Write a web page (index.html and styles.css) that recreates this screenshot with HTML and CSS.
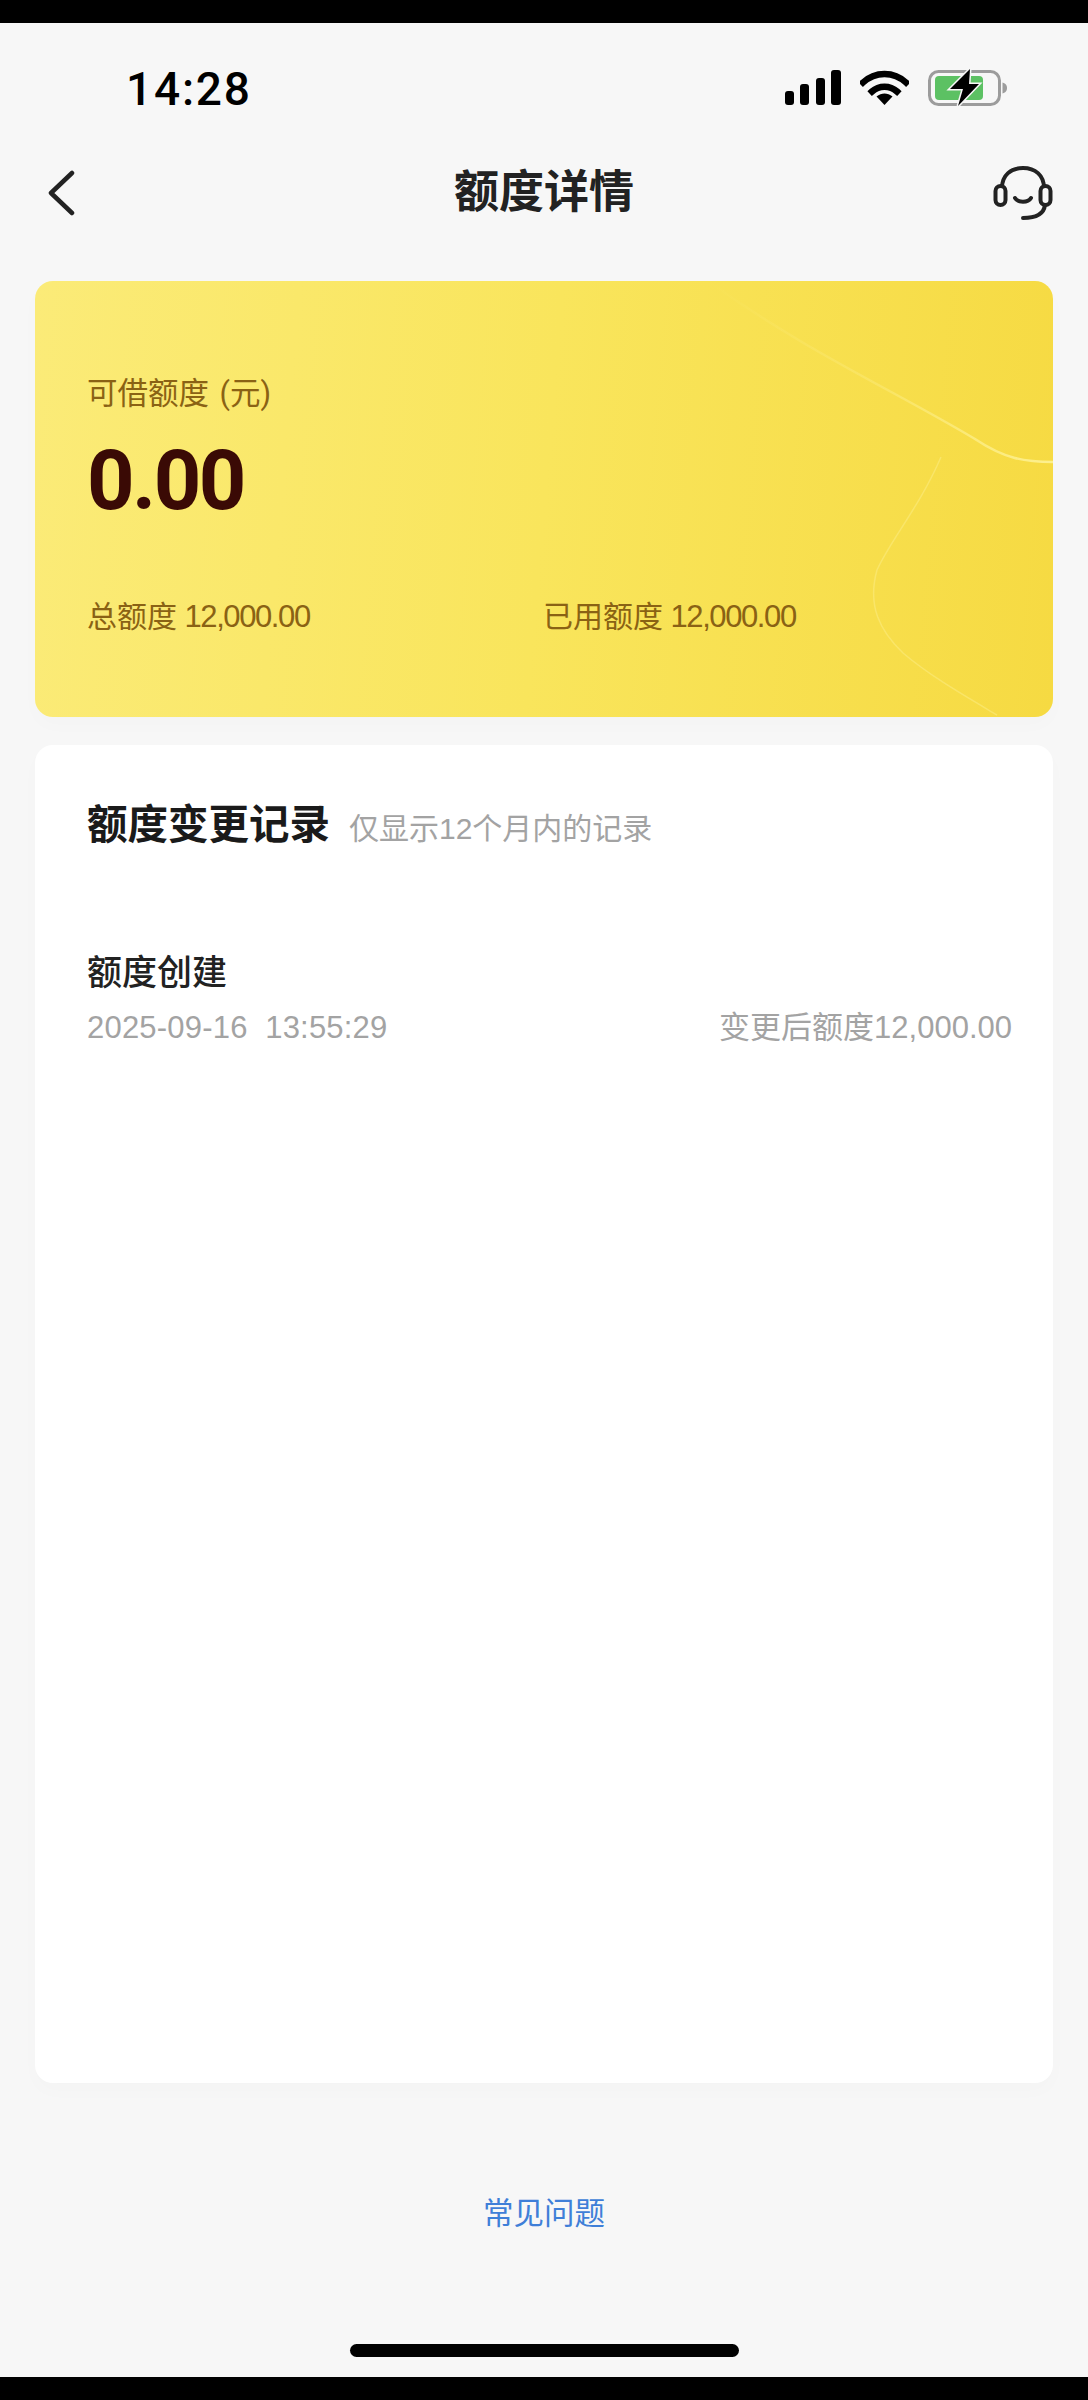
FILE: index.html
```html
<!DOCTYPE html>
<html lang="zh-CN">
<head>
    <meta charset="UTF-8">
    <meta name="viewport" content="width=device-width, initial-scale=1.0">
    <title>额度详情</title>
    <link rel="stylesheet" href="styles.css">
</head>
<body>
    <div class="black-bar"></div>

    <div class="screen">
        <div class="status-bar">
            <span class="time">14:28</span>
            <div class="status-icons">
                <svg class="signal" width="56" height="35" viewBox="0 0 56 35">
                    <rect x="0" y="21" width="9" height="14" rx="3"/>
                    <rect x="15" y="14" width="9" height="21" rx="3"/>
                    <rect x="31" y="8" width="9" height="27" rx="3"/>
                    <rect x="46" y="0" width="10" height="35" rx="3"/>
                </svg>
                <svg class="wifi" width="49" height="35" viewBox="0 0 49 35">
                    <path d="M3 12.5C15 1 34 1 46 12.5" fill="none" stroke="#000" stroke-width="6.5" stroke-linecap="square"/>
                    <path d="M12 21.5C19 15 30 15 37 21.5" fill="none" stroke="#000" stroke-width="6.5" stroke-linecap="square"/>
                    <path d="M16.5 26.5C21.5 22.5 27.5 22.5 32.5 26.5L24.5 35Z"/>
                </svg>
                <svg class="battery" width="80" height="37" viewBox="0 0 80 37">
                    <rect x="1.5" y="2.5" width="70" height="33" rx="9" fill="none" stroke="#9c9c9c" stroke-width="3"/>
                    <rect x="7" y="7" width="48" height="24" rx="4" fill="#5cc163"/>
                    <path d="M74.5 13.5C78 14.5 79 16.5 79 19C79 21.5 78 23.5 74.5 24.5Z" fill="#9c9c9c"/>
                    <path d="M42 0L22 20H35L30 37L51 15H41Z" stroke="#f7f7f7" stroke-width="3" paint-order="stroke"/>
                </svg>
            </div>
        </div>

        <div class="nav-bar">
            <svg class="nav-back" width="28" height="46" viewBox="0 0 28 46">
                <path d="M25 3L4 23L25 43" fill="none" stroke="#222" stroke-width="4.5" stroke-linecap="round" stroke-linejoin="round"/>
            </svg>
            <h1 class="nav-title">额度详情</h1>
            <svg class="nav-service" width="60" height="54" viewBox="0 0 60 54">
                <path d="M9 22C9 9 18 2 30 2C42 2 51 9 51 22" fill="none" stroke="#222" stroke-width="4"/>
                <rect x="2.5" y="20" width="10" height="19" rx="5" fill="none" stroke="#222" stroke-width="4"/>
                <rect x="47.5" y="20" width="10" height="19" rx="5" fill="none" stroke="#222" stroke-width="4"/>
                <path d="M22 32C25 37 35 37 38 32" fill="none" stroke="#222" stroke-width="4" stroke-linecap="round"/>
                <path d="M52 39C51 47 44 52 30 52" fill="none" stroke="#222" stroke-width="4" stroke-linecap="round"/>
            </svg>
        </div>

        <section class="quota-card">
            <svg class="quota-lines" width="1018" height="436" viewBox="0 0 1018 436">
                <defs>
                    <linearGradient id="lineFade" x1="0" y1="0" x2="1" y2="0">
                        <stop offset="0" stop-color="#fdf08f" stop-opacity="0"/>
                        <stop offset="0.5" stop-color="#fdf08f" stop-opacity="0.35"/>
                        <stop offset="1" stop-color="#fdf08f" stop-opacity="1"/>
                    </linearGradient>
                </defs>
                <path d="M673 0C770 70 860 110 940 158C970 178 990 181 1018 181" fill="none" stroke="url(#lineFade)" stroke-width="2.5"/>
                <path d="M906 176C885 225 855 260 842 289C832 325 845 350 868 372C895 395 930 415 962 434" fill="none" stroke="#fdf08f" stroke-opacity="0.45" stroke-width="1.5"/>
            </svg>
            <div class="quota-label">可借额度 (元)</div>
            <div class="quota-amount">0.00</div>
            <div class="quota-row">
                <span class="quota-item">总额度 <span class="quota-num">12,000.00</span></span>
                <span class="quota-item">已用额度 <span class="quota-num">12,000.00</span></span>
            </div>
        </section>

        <section class="record-card">
            <div class="record-head">
                <h2 class="record-title">额度变更记录</h2>
                <span class="record-hint">仅显示12个月内的记录</span>
            </div>
            <div class="record-item">
                <div class="record-name">额度创建</div>
                <div class="record-meta">
                    <span class="record-time">2025-09-16&nbsp;&nbsp;13:55:29</span>
                    <span>变更后额度12,000.00</span>
                </div>
            </div>
        </section>

        <a class="faq-link" href="#">常见问题</a>
        <div class="home-bar"></div>
    </div>

    <div class="black-bar bottom"></div>
</body>
</html>
```

FILE: styles.css
```css
* {
    box-sizing: border-box;
}

html, body {
    margin: 0;
    padding: 0;
}

body {
    width: 1088px;
    height: 2400px;
    display: flex;
    flex-direction: column;
    background-color: #000;
    font-family: Roboto, "Noto Sans CJK SC", sans-serif;
}

.black-bar {
    height: 23px;
    background-color: #000;
}

.black-bar.bottom {
    flex: 1;
}

.screen {
    height: 2354px;
    background-color: #f7f7f7;
    padding: 0 35px;
    display: flex;
    flex-direction: column;
}

/* status bar */
.status-bar {
    height: 82px;
    padding: 46px 45px 0 91px;
    display: flex;
    justify-content: space-between;
    align-items: center;
}

.time {
    position: relative;
    top: 2px;
    font-size: 46px;
    font-weight: 500;
    line-height: 36px;
    color: #000;
    letter-spacing: 1.8px;
}

.status-icons {
    display: flex;
    align-items: center;
    gap: 19px;
}

/* nav */
.nav-bar {
    height: 52px;
    margin-top: 61px;
    display: grid;
    grid-template-columns: 1fr auto 1fr;
    align-items: center;
}

.nav-back {
    margin-left: 12px;
}

.nav-service {
    justify-self: end;
}

.nav-title {
    margin: 0;
    font-size: 45px;
    font-weight: 700;
    line-height: 52px;
    color: #222;
}

/* yellow card */
.quota-card {
    position: relative;
    height: 436px;
    margin-top: 63px;
    padding: 93px 52px 0;
    border-radius: 18px;
    overflow: hidden;
    background: linear-gradient(95deg, #fbeb78 0%, #f9e55c 50%, #f6da42 100%);
    box-shadow: 0 8px 20px rgba(0, 0, 0, 0.015);
}

.quota-lines {
    position: absolute;
    top: 0;
    left: 0;
}

.quota-label {
    font-size: 30.5px;
    line-height: 40px;
    word-spacing: 3px;
    color: #8a6214;
}

.quota-amount {
    margin-top: 23px;
    font-size: 83px;
    font-weight: 700;
    line-height: 88px;
    letter-spacing: -2.5px;
    color: #3a0a05;
}

.quota-row {
    display: flex;
    margin-top: 72px;
}

.quota-item {
    width: 456px;
    font-size: 30px;
    line-height: 40px;
    color: #8a6214;
}

.quota-num {
    font-family: "Liberation Sans", sans-serif;
    font-size: 31px;
    letter-spacing: -1.4px;
}

/* records */
.record-card {
    height: 1338px;
    margin-top: 28px;
    padding: 52px 41px 0 52px;
    border-radius: 18px;
    background-color: #fff;
    box-shadow: 0 8px 20px rgba(0, 0, 0, 0.015);
}

.record-head {
    display: flex;
    align-items: baseline;
    gap: 19px;
}

.record-title {
    margin: 0;
    font-size: 40.5px;
    font-weight: 700;
    line-height: 56px;
    color: #1a1a1a;
}

.record-hint {
    font-family: "Liberation Sans", "Noto Sans CJK SC", sans-serif;
    font-size: 30px;
    color: #a3a3a3;
}

.record-item {
    margin-top: 97px;
}

.record-name {
    font-size: 35px;
    font-weight: 500;
    line-height: 48px;
    color: #222;
}

.record-meta {
    display: flex;
    justify-content: space-between;
    margin-top: 10px;
    font-family: "Liberation Sans", "Noto Sans CJK SC", sans-serif;
    font-size: 31px;
    line-height: 40px;
    color: #a3a3a3;
}

.record-time {
    letter-spacing: 0.2px;
}

/* footer */
.faq-link {
    margin-top: 109px;
    text-align: center;
    font-size: 30.5px;
    line-height: 44px;
    color: #3f7fd8;
    text-decoration: none;
}

.home-bar {
    width: 389px;
    height: 13px;
    margin: 108px auto 0;
    border-radius: 7px;
    background-color: #000;
}
```
